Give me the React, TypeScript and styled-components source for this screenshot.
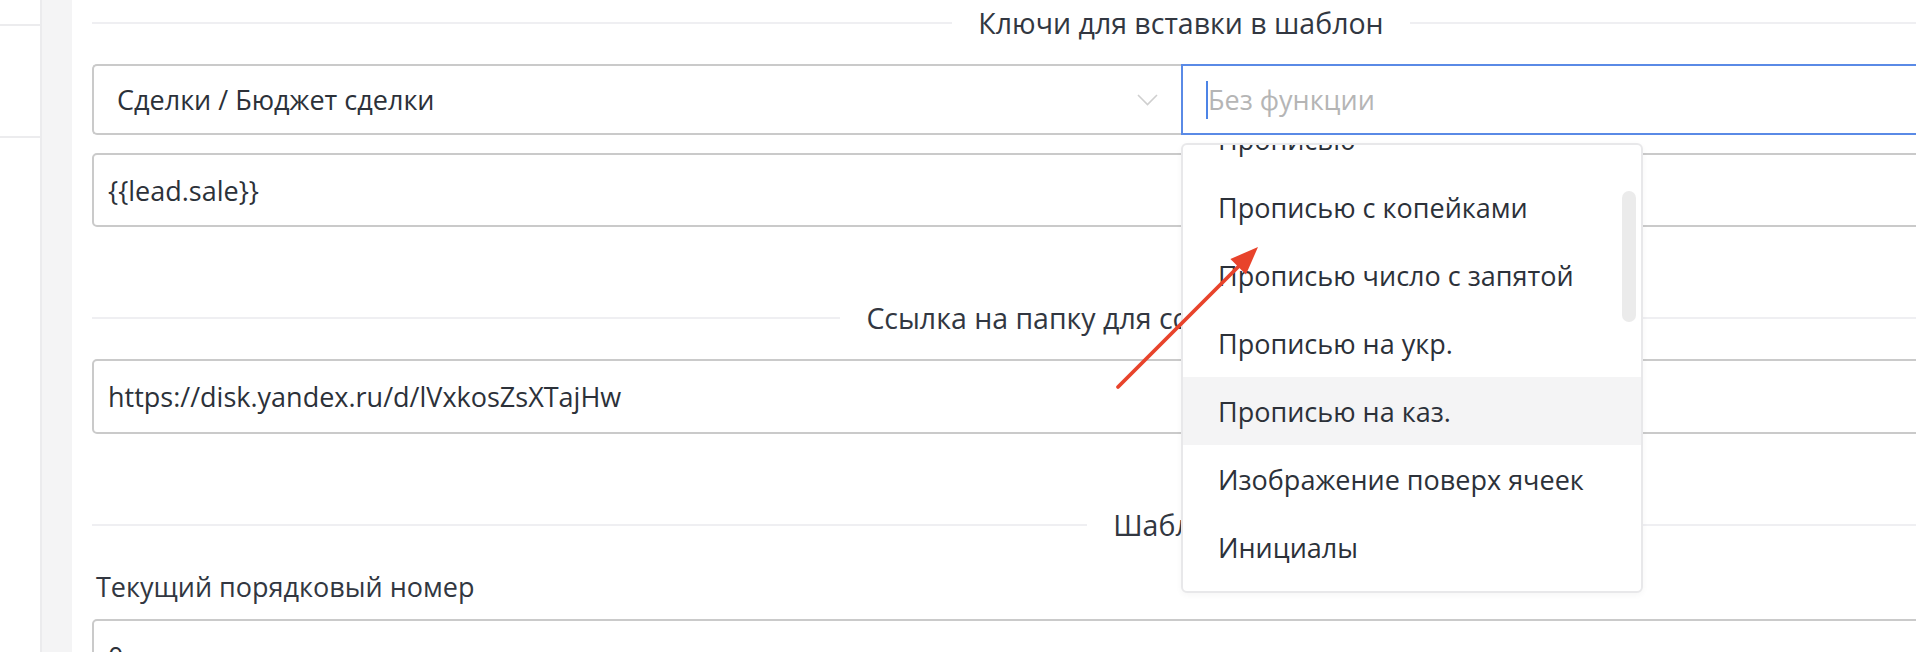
import React from 'react';
import styled, { createGlobalStyle } from 'styled-components';

const GlobalStyle = createGlobalStyle`
  html, body {
    margin: 0;
    padding: 0;
    background: #ffffff;
    overflow: hidden;
  }
  body {
    font-family: "Open Sans", "Noto Sans", sans-serif;
    color: #2c3139;
  }
  * { box-sizing: border-box; }
`;

const Page = styled.div`
  position: relative;
  display: flex;
  width: 1916px;
  height: 652px;
  overflow: hidden;
`;

const Sidebar = styled.aside`
  flex: 0 0 42px;
  border-right: 2px solid #ebebed;
  padding-top: 24px;
  display: flex;
  flex-direction: column;
  gap: 110px;
`;

const SidebarRule = styled.div`
  height: 2px;
  background: #ececee;
`;

const Gutter = styled.div`
  flex: 0 0 30px;
  background: #f4f4f5;
`;

const Main = styled.main`
  flex: 0 0 auto;
  padding: 5px 0 0 20px;
`;

const Form = styled.div`
  width: 2178px;
  display: flex;
  flex-direction: column;
`;

const SectionTitle = styled.div<{ $mt?: number }>`
  display: flex;
  align-items: center;
  height: 36px;
  margin-top: ${(p) => p.$mt ?? 0}px;
  font-size: 28.5px;
  color: #323741;
  white-space: nowrap;

  &::before,
  &::after {
    content: '';
    flex: 1;
    height: 2px;
    background: #efeff2;
  }

  span {
    padding: 0 26px;
  }
`;

const Row = styled.div`
  display: grid;
  grid-template-columns: 1fr 1fr;
  margin-top: 23px;
`;

const SelectBox = styled.div`
  height: 71px;
  border: 2px solid #cacaca;
  border-right: none;
  border-radius: 5px 0 0 5px;
  display: flex;
  align-items: center;
  justify-content: space-between;
  padding: 0 23px;
  font-size: 27px;
`;

const Chevron = styled.svg`
  width: 21px;
  height: 12px;
  flex: 0 0 auto;
`;

const FocusInput = styled.div`
  position: relative;
  height: 71px;
  border: 2px solid #5a8ae6;
  display: flex;
  align-items: center;
  padding-left: 23px;
  font-size: 27px;
`;

const Caret = styled.span`
  display: inline-block;
  width: 2px;
  height: 38px;
  background: #4d84e6;
`;

const Placeholder = styled.span`
  color: #b5b5b5;
`;

const TextInput = styled.div<{ $mt: number; $h?: number }>`
  height: ${(p) => p.$h ?? 74}px;
  margin-top: ${(p) => p.$mt}px;
  border: 2px solid #cacaca;
  border-radius: 5px;
  display: flex;
  align-items: center;
  padding-left: 14px;
  font-size: 27px;
`;

const FieldLabel = styled.div`
  margin-top: 26px;
  height: 36px;
  line-height: 36px;
  padding-left: 4px;
  font-size: 27px;
  color: #323741;
`;

const Dropdown = styled.div`
  position: absolute;
  top: calc(100% + 10px);
  left: -2px;
  width: 462px;
  height: 450px;
  background: #ffffff;
  border: 2px solid #e8e8ea;
  border-radius: 6px;
  box-shadow: 0 2px 6px rgba(0, 0, 0, 0.04);
  overflow: hidden;
  z-index: 2;
`;

const OptionList = styled.ul`
  list-style: none;
  margin: -40px 0 0;
  padding: 0;
`;

const Option = styled.li<{ $active?: boolean }>`
  height: 68px;
  display: flex;
  align-items: center;
  padding-left: 35px;
  font-size: 27px;
  white-space: nowrap;
  background: ${(p) => (p.$active ? '#f4f4f5' : 'transparent')};
`;

const ScrollThumb = styled.div`
  position: absolute;
  top: 46px;
  right: 5px;
  width: 14px;
  height: 131px;
  border-radius: 7px;
  background: #ebebeb;
`;

const Pointer = styled.svg`
  position: absolute;
  left: 1100px;
  top: 230px;
  width: 180px;
  height: 180px;
  z-index: 3;
  pointer-events: none;
`;

const options = [
  'Прописью',
  'Прописью с копейками',
  'Прописью число с запятой',
  'Прописью на укр.',
  'Прописью на каз.',
  'Изображение поверх ячеек',
  'Инициалы',
];

export default function App() {
  return (
    <>
      <GlobalStyle />
      <Page>
        <Sidebar>
          <SidebarRule />
          <SidebarRule />
        </Sidebar>
        <Gutter />
        <Main>
          <Form>
            <SectionTitle>
              <span>Ключи для вставки в шаблон</span>
            </SectionTitle>
            <Row>
              <SelectBox>
                <span>Сделки / Бюджет сделки</span>
                <Chevron viewBox="0 0 21 12">
                  <path d="M1 1 L10.5 10.5 L20 1" fill="none" stroke="#cfcfcf" strokeWidth="1.6" />
                </Chevron>
              </SelectBox>
              <FocusInput>
                <Caret />
                <Placeholder>Без функции</Placeholder>
                <Dropdown>
                  <OptionList>
                    {options.map((o) => (
                      <Option key={o} $active={o === 'Прописью на каз.'}>
                        {o}
                      </Option>
                    ))}
                  </OptionList>
                  <ScrollThumb />
                </Dropdown>
              </FocusInput>
            </Row>
            <TextInput $mt={18}>{'{{lead.sale}}'}</TextInput>

            <SectionTitle $mt={73}>
              <span>Ссылка на папку для сохранения документов</span>
            </SectionTitle>
            <TextInput $mt={23} $h={75}>
              https://disk.yandex.ru/d/lVxkosZsXTajHw
            </TextInput>

            <SectionTitle $mt={73}>
              <span>Шаблоны</span>
            </SectionTitle>
            <FieldLabel>Текущий порядковый номер</FieldLabel>
            <TextInput $mt={14}>0</TextInput>
          </Form>
        </Main>
        <Pointer viewBox="0 0 180 180">
          <line x1="18" y1="157" x2="140" y2="35" stroke="#e8432b" strokeWidth="3.8" strokeLinecap="round" />
          <polygon points="158,17 146,44.6 130.4,29" fill="#e8432b" />
        </Pointer>
      </Page>
    </>
  );
}
